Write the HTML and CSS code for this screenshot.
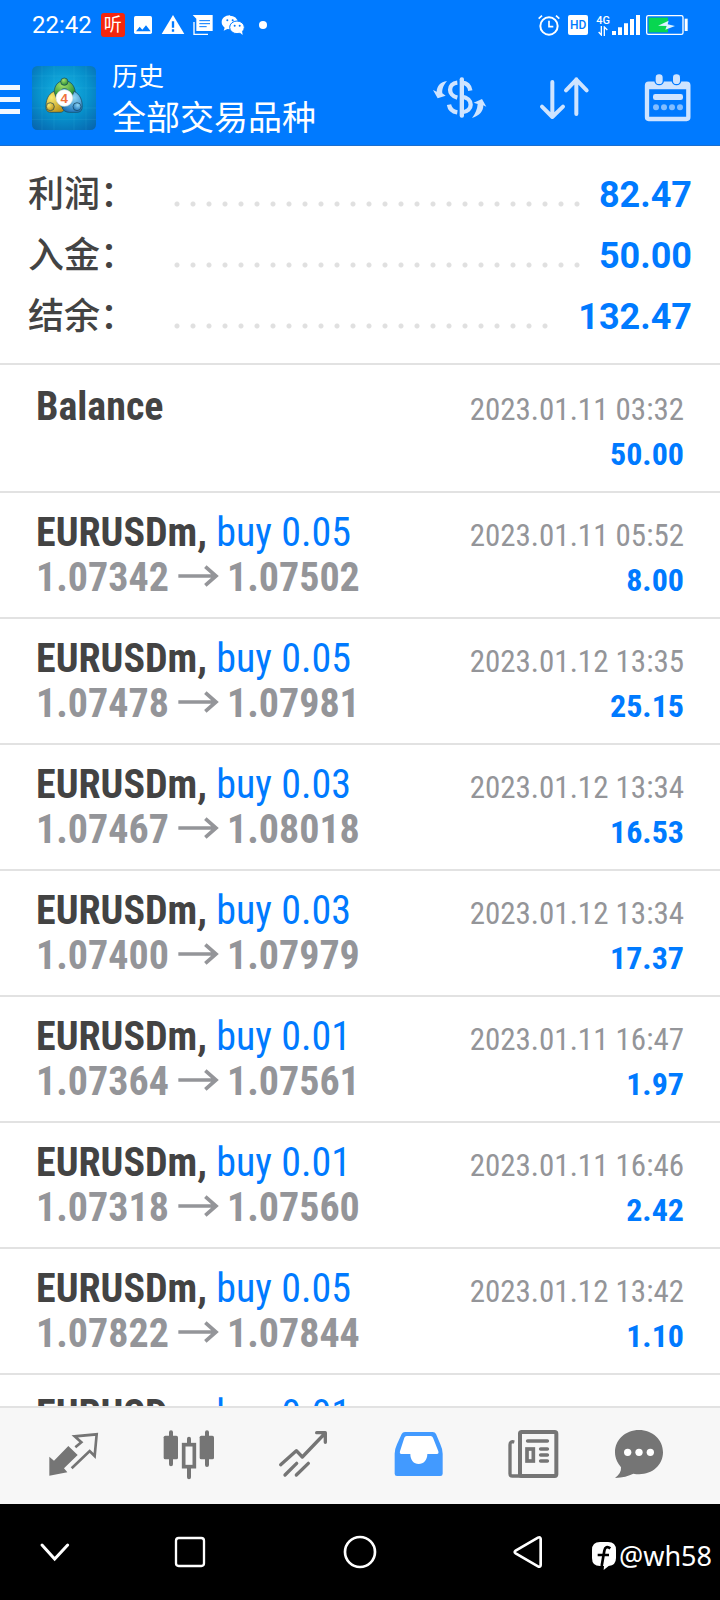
FILE: index.html
```html
<!DOCTYPE html>
<html lang="zh-CN">
<head>
<meta charset="utf-8">
<meta name="viewport" content="width=device-width, initial-scale=1">
<title>历史 - 全部交易品种</title>
<link rel="stylesheet" href="styles.css">
</head>
<body>
<div class="app">
  <header class="top">
    <div class="status">
      <div class="status-group">
        <span class="clock">22:42</span>
        <span class="badge-listen">听</span>
        <svg class="st-icon" width="22" height="22" viewBox="0 0 66 66" aria-hidden="true"><rect x="6" y="6" width="54" height="54" rx="5" fill="#fff"/><path d="M12 52L23 38l8 9 11-13 14 18z" fill="#007aff"/></svg>
        <svg class="st-icon" width="24" height="22" viewBox="0 0 72 66" aria-hidden="true"><path d="M36 3L70 60H2z" fill="#fff"/><path d="M36 22v19M36 46v7" stroke="#007aff" stroke-width="7"/></svg>
        <svg class="st-icon" width="22" height="22" viewBox="0 0 66 66" aria-hidden="true"><path d="M2 3h60v48H13V14z" fill="#fff"/><path d="M6 24v37h42" fill="none" stroke="#fff" stroke-width="4"/><path d="M22 20h32M22 29h32M22 38h22" stroke="#007aff" stroke-width="3"/></svg>
        <svg class="st-icon" width="24" height="22" viewBox="0 0 72 66" aria-hidden="true"><path d="M27 4C12 4 2 13 2 25c0 7 4 12 9 16l-3 9 11-5 8 1z" fill="#fff"/><ellipse cx="27" cy="25" rx="23" ry="20" fill="#fff"/><ellipse cx="48" cy="40" rx="22" ry="19" fill="#fff" stroke="#007aff" stroke-width="3"/><path d="M55 55l10 8-2-13z" fill="#fff"/><g fill="#007aff"><circle cx="19" cy="19" r="3"/><circle cx="35" cy="19" r="3"/><circle cx="41" cy="35" r="3"/><circle cx="56" cy="35" r="3"/></g></svg>
        <span class="more-dot"></span>
      </div>
      <div class="status-group right">
        <svg width="22" height="22" viewBox="0 0 66 66" aria-hidden="true"><g fill="none" stroke="#fff" stroke-width="6"><circle cx="33" cy="36" r="26"/><path d="M33 20v18h13M2 14L12 5M54 5l10 9" stroke-width="5"/></g></svg>
        <span class="hd">HD</span>
        <span class="net"><span class="net-4g">4G</span><svg width="10" height="10" viewBox="0 0 30 30" aria-hidden="true"><path d="M10 0v27L2 18M19 30V3l9 9" fill="none" stroke="#fff" stroke-width="4"/></svg></span>
        <svg class="signal" width="28" height="20" viewBox="0 0 84 60" aria-hidden="true"><path d="M0 48h12v12H0zM18 37h12v23H18zM36 25h12v35H36zM54 12h12v48H54zM72 0h12v60H72z" fill="#fff"/></svg>
        <svg class="battery" width="42" height="20" viewBox="0 0 126 60" aria-hidden="true"><rect x="2" y="2" width="109" height="56" rx="5" fill="none" stroke="#fff" stroke-width="4"/><path d="M116 11h9v37h-9z" fill="#fff"/><path d="M8 8h58v44H8z" fill="#07d650"/><path d="M36 32L68 17l-3 11 22 5-29 11 4-11z" fill="#d9f3ff"/></svg>
      </div>
    </div>
    <div class="bar">
      <button class="menu" aria-label="菜单"><span></span><span></span><span></span></button>
      <svg class="logo" width="64" height="64" viewBox="0 0 192 192" role="img" aria-label="MetaTrader 4">
        <defs>
          <radialGradient id="sky" cx=".5" cy=".4" r=".75"><stop offset="0" stop-color="#16b5e4"/><stop offset=".55" stop-color="#0790cb"/><stop offset="1" stop-color="#0765ae"/></radialGradient>
          <radialGradient id="grn" cx=".4" cy=".3" r=".8"><stop offset="0" stop-color="#a5e06a"/><stop offset="1" stop-color="#17832e"/></radialGradient>
          <radialGradient id="yel" cx=".3" cy=".3" r=".8"><stop offset="0" stop-color="#f7ea70"/><stop offset="1" stop-color="#b98f18"/></radialGradient>
          <radialGradient id="blu" cx=".6" cy=".3" r=".8"><stop offset="0" stop-color="#8fd6f5"/><stop offset="1" stop-color="#1269b3"/></radialGradient>
        </defs>
        <rect width="192" height="192" rx="16" fill="url(#sky)"/>
        <path d="M30 0v192M66 0v192M126 0v192M162 0v192M0 30h192M0 66h192M0 126h192M0 160h192" stroke="#54c9ec" stroke-opacity=".2" stroke-width="2"/>
        <g stroke="#16445a" stroke-width="2">
          <path d="M66 90c-2-28 10-46 31-46s35 18 33 46l-16-2c-2-14-8-20-17-20s-15 8-16 20z" fill="url(#grn)"/>
          <path d="M66 76c-18 8-26 28-24 52 2 9 8 11 18 11h24c6 0 10-3 14-8L78 112z" fill="url(#yel)"/>
          <path d="M126 76c18 8 27 28 24 52-2 9-8 11-18 11h-20c-10 0-18-5-22-14l22-12z" fill="url(#blu)"/>
          <circle cx="97" cy="47" r="11" fill="url(#grn)"/><circle cx="55" cy="122" r="12" fill="url(#yel)"/><circle cx="135" cy="122" r="12" fill="url(#blu)"/>
          <circle cx="97" cy="96" r="25" fill="#fff" stroke="#e4e6dc"/>
        </g>
        <text class="logo-num" x="97" y="110" text-anchor="middle">4</text>
      </svg>
      <div class="titles"><h1>历史</h1><p>全部交易品种</p></div>
      <div class="actions">
        <button aria-label="货币"><svg width="54" height="48" viewBox="0 0 162 144"><g fill="none" stroke="#cfe4ff" stroke-width="13"><path d="M73 26C44 29 44 64 73 71M48 92C50 106 60 113 73 115"/><path d="M86 26C102 27 110 36 112 50M86 68C122 72 122 112 86 115"/></g><rect x="80" y="10" width="13" height="121" rx="6" fill="#cfe4ff"/><g fill="#cfe4ff"><path d="M42 21C22 24 12 36 11 53L0 48l14 25 24-8-10-7c-2-12 4-26 14-37z"/><path d="M117 132c23-7 34-20 34-38l9 4-13-23-25 11 12 4c-1 15-7 29-17 42z"/></g></svg></button>
        <button aria-label="排序"><svg width="54" height="48" viewBox="0 0 162 144"><path d="M46 24v105M15 98l31 31 32-31M118 120V16M87 49l31-32 31 32" fill="none" stroke="#cfe4ff" stroke-width="12" stroke-linecap="round" stroke-linejoin="round"/></svg></button>
        <button aria-label="日期"><svg width="54" height="48" viewBox="0 0 162 144"><g fill="none" stroke="#cfe4ff"><rect x="18" y="29" width="124" height="106" rx="5" stroke-width="13"/><path d="M18 35h124" stroke-width="22"/></g><g fill="#cfe4ff" stroke="#007aff" stroke-width="4"><rect x="42" y="-1" width="25" height="33" rx="12"/><rect x="94" y="-1" width="25" height="33" rx="12"/></g><rect x="36" y="60" width="90" height="18" rx="7" fill="#cfe4ff"/><g fill="#82bdff"><circle cx="45" cy="100" r="9"/><circle cx="69" cy="100" r="9"/><circle cx="93" cy="100" r="9"/><circle cx="117" cy="100" r="9"/></g></svg></button>
      </div>
    </div>
  </header>

  <dl class="summary">
    <div><dt>利润：</dt><span class="leader"></span><dd>82.47</dd></div>
    <div><dt>入金：</dt><span class="leader"></span><dd>50.00</dd></div>
    <div><dt>结余：</dt><span class="leader"></span><dd>132.47</dd></div>
  </dl>

  <svg class="defs" aria-hidden="true"><symbol id="arrow" viewBox="0 0 126 66"><path d="M4 33h112M85 5l32 28-32 28" fill="none" stroke="#949599" stroke-width="11"/></symbol></svg>

  <main class="list">
    <article class="deal first"><div class="name"><b>Balance</b></div><time>2023.01.11 03:32</time><div class="price"></div><div class="profit">50.00</div></article>
    <article class="deal"><div class="name"><b>EURUSDm,</b> buy 0.05</div><time>2023.01.11 05:52</time><div class="price">1.07342<svg class="to"><use href="#arrow"/></svg>1.07502</div><div class="profit">8.00</div></article>
    <article class="deal"><div class="name"><b>EURUSDm,</b> buy 0.05</div><time>2023.01.12 13:35</time><div class="price">1.07478<svg class="to"><use href="#arrow"/></svg>1.07981</div><div class="profit">25.15</div></article>
    <article class="deal"><div class="name"><b>EURUSDm,</b> buy 0.03</div><time>2023.01.12 13:34</time><div class="price">1.07467<svg class="to"><use href="#arrow"/></svg>1.08018</div><div class="profit">16.53</div></article>
    <article class="deal"><div class="name"><b>EURUSDm,</b> buy 0.03</div><time>2023.01.12 13:34</time><div class="price">1.07400<svg class="to"><use href="#arrow"/></svg>1.07979</div><div class="profit">17.37</div></article>
    <article class="deal"><div class="name"><b>EURUSDm,</b> buy 0.01</div><time>2023.01.11 16:47</time><div class="price">1.07364<svg class="to"><use href="#arrow"/></svg>1.07561</div><div class="profit">1.97</div></article>
    <article class="deal"><div class="name"><b>EURUSDm,</b> buy 0.01</div><time>2023.01.11 16:46</time><div class="price">1.07318<svg class="to"><use href="#arrow"/></svg>1.07560</div><div class="profit">2.42</div></article>
    <article class="deal"><div class="name"><b>EURUSDm,</b> buy 0.05</div><time>2023.01.12 13:42</time><div class="price">1.07822<svg class="to"><use href="#arrow"/></svg>1.07844</div><div class="profit">1.10</div></article>
    <article class="deal"><div class="name"><b>EURUSDm,</b> buy 0.01</div><time>2023.01.12 13:41</time></article>
  </main>

  <nav class="tabs">
    <button aria-label="行情"><svg width="52" height="52" viewBox="0 0 156 156"><path d="M4 80l14 12 43-44 28 27-41 40 10 12-54 10z" fill="#757575"/><path d="M82 52l18-15-20-18 66-6-6 65-15-15-54 52" fill="none" stroke="#757575" stroke-width="8"/></svg></button>
    <button aria-label="图表"><svg width="52" height="52" viewBox="0 0 156 156"><g fill="#757575"><rect x="2" y="17" width="43" height="71" rx="5"/><rect x="110" y="17" width="43" height="71" rx="5"/></g><path d="M24 7v96M132 7v98M78 26v18M78 112v30" stroke="#757575" stroke-width="12" stroke-linecap="round"/><rect x="62" y="44" width="32" height="66" fill="#f7f7f7" stroke="#757575" stroke-width="11"/></svg></button>
    <button aria-label="交易"><svg width="52" height="52" viewBox="0 0 156 156"><path d="M8 104l47-42 18 19 66-69M116 8h26v29M21 135l35-35M55 135l36-35" fill="none" stroke="#757575" stroke-width="10" stroke-linecap="round" stroke-linejoin="round"/></svg></button>
    <button aria-label="历史" aria-current="page"><svg width="52" height="52" viewBox="0 0 156 156"><path d="M26 12Q29 6 36 6h83q7 0 10 6l13 31q7 15 7 28v60q0 7-7 7H12q-7 0-7-7V71q0-13 7-28z" fill="#429aff"/><path d="M41 18h72q5 0 7 5l16 41q2 8-4 8h-29c0 18-11 30-26 30S52 90 52 72H25q-6 0-4-8l13-41q2-5 7-5z" fill="#fff"/></svg></button>
    <button aria-label="新闻"><svg width="52" height="52" viewBox="0 0 156 156"><g fill="none" stroke="#757575" stroke-width="12"><rect x="36" y="6" width="109" height="132" rx="5"/><path d="M19 36Q6 33 6 44v87q0 7 7 7h26" stroke-width="10"/><path d="M59 33h59M98 57h20M98 75h20M98 93h20" stroke-linecap="round" stroke-width="11"/><rect x="57" y="57" width="19" height="36" stroke-width="11"/></g></svg></button>
    <button aria-label="消息"><svg width="52" height="52" viewBox="0 0 156 156"><path d="M78 0C37 0 6 29 6 67c0 18 8 32 18 45 1 13-5 23-18 32 23-1 41-6 55-13 46 10 89-20 89-64C150 29 119 0 78 0z" fill="#757575"/><g fill="#fff"><circle cx="44" cy="67" r="11"/><circle cx="78" cy="67" r="11"/><circle cx="112" cy="67" r="11"/></g></svg></button>
  </nav>

  <footer class="sysnav">
    <button aria-label="收起"><svg width="32" height="34" viewBox="0 0 96 102"><path d="M9 30l38 42 39-42" fill="none" stroke="#fff" stroke-width="9" stroke-linecap="round"/></svg></button>
    <button aria-label="最近任务"><svg width="32" height="34" viewBox="0 0 96 102"><rect x="6" y="9" width="84" height="84" rx="8" fill="none" stroke="#fff" stroke-width="7"/></svg></button>
    <button aria-label="主屏幕"><svg width="34" height="34" viewBox="0 0 102 102"><circle cx="51" cy="51" r="45" fill="none" stroke="#fff" stroke-width="8"/></svg></button>
    <button aria-label="返回"><svg width="32" height="34" viewBox="0 0 96 102"><path d="M11 55Q5 51 11 47L78 8q7-4 8 4v78q-1 8-8 4z" fill="none" stroke="#fff" stroke-width="8"/></svg></button>
    <div class="watermark"><svg width="24" height="28" viewBox="0 0 72 84" aria-hidden="true"><path d="M24 0h24q24 0 24 24v24q0 22-22 24L35 84l1-12H24Q0 72 0 48V24Q0 0 24 0z" fill="#fff"/><path d="M55 19c-9-7-16-4-18 7l-8 46M17 39h34" fill="none" stroke="#000" stroke-width="8"/></svg><span>@wh58</span></div>
  </footer>
</div>
</body>
</html>
```
FILE: styles.css
```css
* { box-sizing: border-box; }
body, h1, p, dl, dd { margin: 0; }
body {
  background: #fff;
  color: #434343;
  font-family: Roboto, "Noto Sans CJK SC", sans-serif;
}
button {
  display: flex;
  align-items: center;
  justify-content: center;
  padding: 0;
  border: 0;
  background: none;
}
svg { display: block; flex: none; }
.app {
  display: flex;
  flex-direction: column;
  height: 100vh;
}

/* header */
.top {
  background: #007aff;
  color: #fff;
  border-bottom: 1px solid #1a6fd0;
}
.status {
  display: flex;
  justify-content: space-between;
  align-items: center;
  height: 50px;
  padding: 0 32px;
}
.status-group { display: flex; align-items: center; gap: 7px; }
.status-group.right { gap: 8px; }
.clock { font-size: 24px; margin-right: 2px; }
.badge-listen {
  width: 24px;
  height: 24px;
  border-radius: 3px;
  background: #f5260d;
  font-size: 18px;
  line-height: 24px;
  text-align: center;
}
.more-dot {
  width: 8px;
  height: 8px;
  margin-left: 7px;
  border-radius: 50%;
  background: #fff;
}
.hd {
  width: 20px;
  height: 20px;
  border-radius: 2px;
  background: #fff;
  color: #007aff;
  font-size: 12px;
  font-weight: 500;
  line-height: 20px;
  text-align: center;
}
.net { display: flex; flex-direction: column; align-items: center; }
.net-4g { font-size: 11px; font-weight: 500; line-height: 11px; }
.signal { margin-left: -6px; }
.battery { margin-left: -2px; }
.bar { display: flex; align-items: center; height: 95px; }
.menu {
  flex-direction: column;
  align-items: stretch;
  gap: 7px;
  width: 20px;
  margin-right: 12px;
  padding-top: 4px;
}
.menu span { height: 5px; background: #f2f8ff; }
.logo-num { font: 700 40px "Liberation Sans", sans-serif; fill: #f0713c; }
.titles { margin-left: 16px; }
.titles h1 { font-size: 26px; font-weight: 400; line-height: 40px; }
.titles p { font-size: 34px; line-height: 42px; }
.actions {
  display: flex;
  gap: 50px;
  margin-left: auto;
  padding-right: 25px;
}

/* account summary */
.summary {
  padding: 17px 28px;
  border-bottom: 2px solid #e2e2e2;
}
.summary > div { display: flex; align-items: center; height: 61px; }
.summary dt {
  width: 146px;
  padding-bottom: 5px;
  font-size: 36px;
  font-weight: 500;
}
.summary dd {
  padding-top: 2px;
  color: #007aff;
  font-size: 36px;
  font-weight: 700;
}
.leader { flex: 1; height: 6px; margin: 20px 6px 0 0; }
.leader::before {
  content: "";
  display: block;
  width: round(down, 100%, 16px);
  height: 6px;
  background: radial-gradient(circle at 3px 3px, #e0e0e0 2px, transparent 3px) 0 0 / 16px 6px repeat-x;
}

/* deals */
.defs { position: absolute; width: 0; height: 0; }
.list {
  flex: 1;
  min-height: 0;
  overflow: hidden;
  font-family: "Roboto Condensed", "Liberation Sans Narrow", Roboto, sans-serif;
}
.deal {
  display: grid;
  grid-template-columns: 1fr auto;
  grid-auto-rows: 45px;
  align-items: baseline;
  height: 126px;
  padding: 17px 36px 0;
  border-bottom: 2px solid #e2e2e2;
  line-height: 45px;
  white-space: nowrap;
}
.deal.first { height: 128px; padding-top: 19px; }
.name { color: #007aff; font-size: 40px; }
.name b { color: #434343; }
.price { color: #949599; font-size: 40px; font-weight: 700; }
.price:empty::before { content: "\200b"; }
.to { display: inline-block; width: 42px; height: 22px; margin: 0 8px; vertical-align: 4px; }
.deal time { color: #949599; font-size: 31px; }
.profit { color: #007aff; font-size: 32px; font-weight: 700; text-align: right; }

/* tab bar */
.tabs {
  display: grid;
  grid-template-columns: repeat(5, 115fr) 96fr;
  height: 98px;
  padding: 0 33px 0 16px;
  border-top: 2px solid #e2e2e2;
  background: #f7f7f7;
}

/* system navigation */
.sysnav {
  position: relative;
  display: grid;
  grid-template-columns: 110fr 160fr 180fr 156fr 114fr;
  height: 96px;
  background: #000;
}
.watermark {
  position: absolute;
  right: 8px;
  bottom: 26px;
  display: flex;
  align-items: center;
  gap: 3px;
  color: #fff;
  font: 27px/36px "Noto Sans", sans-serif;
}
```
